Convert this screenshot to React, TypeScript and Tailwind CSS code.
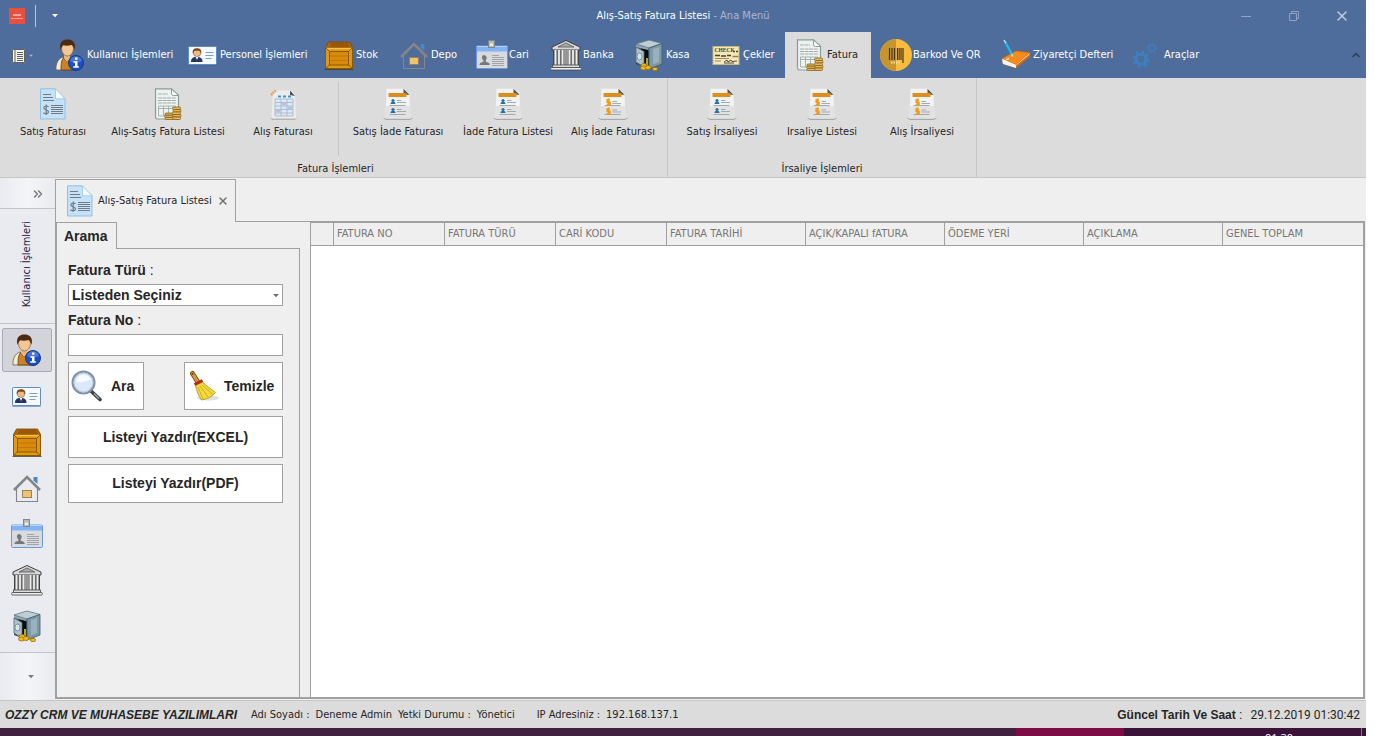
import React from 'react';
import { ChevronUp, ChevronsRight, X } from 'lucide-react';

interface IconProps {
  className?: string;
}

const Svg: React.FC<{ className?: string; children: React.ReactNode }> = ({ className = 'w-8 h-8', children }) => (
  <svg viewBox="0 0 32 32" className={`shrink-0 ${className}`} fill="none" aria-hidden="true">
    {children}
  </svg>
);

const UserInfoIcon = ({ className }: IconProps) => (
  <Svg className={className}>
    <path d="M2 31c-.5-6 2-11.500 7-13l4 2 5-2c5 1 7 5 7 13Z" fill="#f2ead9" stroke="#6e5a3d" strokeWidth=".8" />
    <path d="M7 31c0-5 0-9 2.500-12.500L13 23l4-4.500C21 21 21 26 20 31Z" fill="#c98325" stroke="#6b3d0c" strokeWidth=".8" />
    <path d="M10 15h6v4l-3 4-3-4Z" fill="#e8b583" />
    <ellipse cx="13.500" cy="9.500" rx="6" ry="7.500" fill="#f3c795" stroke="#8a5a2c" strokeWidth=".7" />
    <path d="M6.500 11C4.500 3 9 .5 13.500.5S22.500 3 20.500 11c-.6-2.500-1.500-4-3-5-3 1-6.500.8-8 .3-1.500 1-2.300 2.400-3 4.700Z" fill="#4c2a12" />
    <circle cx="22" cy="24" r="7.500" fill="#1c4fc4" stroke="#123a8c" />
    <path d="M16 22a6.200 6.200 0 0 1 12 0c-4 2-8 2-12 0Z" fill="#5c86e2" opacity=".7" />
    <path d="M21 18.500h2.500v2.300H21Zm-1.500 3.800h4v5h1.300v1.400h-5.600v-1.400H21v-3.600h-1.500Z" fill="#fff" />
  </Svg>
);

const IdCardIcon = ({ className }: IconProps) => (
  <Svg className={className}>
    <rect x="1" y="7.500" width="29" height="19.500" rx="1.500" fill="#40608f" opacity=".5" />
    <rect x="1.500" y="7.500" width="28" height="18" rx="1" fill="#f5faff" stroke="#5f8cc6" />
    <path d="M4 23c0-3.500 1.500-4.500 4-5h3.500c2.500.500 4 1.500 4 5Z" fill="#25375f" />
    <path d="m8.500 17.500 1.500 3.500 1.500-3.500Z" fill="#fff" />
    <circle cx="10" cy="13.800" r="3.800" fill="#ecb98a" stroke="#7a4a1b" strokeWidth=".5" />
    <path d="M5.800 14.500c-.6-4.500 1.500-5.300 4.200-5.300s4.800.8 4.200 5.300l-1.700-2.700h-5Z" fill="#7a4a1b" />
    <path d="M18.500 13.500h8M18.500 16.500h8M18.500 19.500h6" stroke="#7ba0cf" strokeWidth="1.200" />
  </Svg>
);

const CrateIcon = ({ className }: IconProps) => (
  <Svg className={className}>
    <path d="M5.500 3h21l3 5.500H2.500Z" fill="#b0640c" stroke="#7a4706" strokeWidth=".8" />
    <path d="M8 5h17M7 7h19" stroke="#874a05" />
    <rect x="2.500" y="8.500" width="27" height="21" fill="#dc9a10" stroke="#8a5a05" />
    <path d="M3 9.500h26" stroke="#f6c145" strokeWidth="1.500" />
    <rect x="6.500" y="12.500" width="19" height="13.500" fill="#d88a0c" stroke="#8f5505" />
    <path d="M7 17h18M7 21.500h18" stroke="#bd720a" strokeWidth=".8" />
    <path d="m3 9 4 4M29 9l-4 4M3 29l4-3.500M29 29 25 25.500" stroke="#8a5a05" />
    <path d="M1.500 30.500h29" stroke="#4d3a18" strokeWidth=".8" />
  </Svg>
);

const HouseIcon = ({ className }: IconProps) => (
  <Svg className={className}>
    <path d="M22.500 5h4v7l-4-3.500Z" fill="#4a88c4" />
    <path d="M5.500 16v13.500h21V16" stroke="#868686" strokeWidth="1.100" />
    <path d="M3 18 16 5l13 13" stroke="#858585" strokeWidth="2.600" />
    <rect x="11.500" y="18.500" width="9" height="7" fill="#eec371" stroke="#9b8252" />
  </Svg>
);

const BadgeIcon = ({ className }: IconProps) => (
  <Svg className={className}>
    <rect x=".5" y="7" width="31" height="22.500" rx="1" fill="#d7dade" stroke="#6e98dc" />
    <path d="M1 7h30v5.500H1Z" fill="#82b3f5" />
    <path d="M1 7.500h30" stroke="#b6d4fb" />
    <rect x="12.500" y="1.500" width="6" height="7" fill="#b3bcb9" stroke="#7f8a88" />
    <path d="M14 4.500h3V7h-3Z" fill="#e8eceb" />
    <path d="M8 16a2.700 2.700 0 0 1 2.700 2.500c0 1.200-.5 2-1 2.800v1.500c2 .6 4 1 4 3.200H3.500c0-2.200 2-2.600 3.900-3.200v-1.500c-.7-.8-1.500-1.600-1.500-2.800 0-1.500 1-2.500 2.100-2.500Z" fill="#777" />
    <path d="M16 16.500h7M16 18.500h12M16 20.500h12M16 22.500h12M16 24.500h12M16 26.500h12" stroke="#969696" strokeWidth=".8" />
  </Svg>
);

const BankIcon = ({ className }: IconProps) => (
  <Svg className={className}>
    <path d="M16 1.500 30 8v3H2V8Z" fill="#d8d8d8" stroke="#3e3e3e" />
    <path d="m16 4 8 4H8Z" fill="#aaa" stroke="#555" strokeWidth=".8" />
    <path d="M4 11h24v15H4Z" fill="#6d6d6d" />
    <path d="M5.500 11v15M9 11v15M12.500 11v15M19.500 11v15M23 11v15M26.500 11v15" stroke="#ededed" strokeWidth="1.800" />
    <path d="M14 11h4v15h-4Z" fill="#969696" />
    <path d="M3.500 11v15M28.500 11v15" stroke="#444" />
    <rect x="2.500" y="26" width="27" height="2.500" fill="#ddd" stroke="#444" strokeWidth=".8" />
    <rect x=".7" y="28.500" width="30.600" height="2.500" rx=".8" fill="#eee" stroke="#444" strokeWidth=".8" />
  </Svg>
);

const SafeIcon = ({ className }: IconProps) => (
  <Svg className={className}>
    <path d="M3 5 16 1l13 3.500-13 4.500Z" fill="#bfced5" stroke="#5d7883" strokeWidth=".8" />
    <path d="M16 9 29 4.500V25L16 30Z" fill="#7d99a5" stroke="#3d5a67" strokeWidth=".8" />
    <path d="m20 10 6-2v15l-6 2.500Z" fill="#a4bac3" opacity=".7" />
    <path d="M3 5.500 16 9v21L3 25Z" fill="#31444d" />
    <path d="m3 5.500 12.500 3.300v2.700L3 8Z" fill="#8ea6b1" />
    <path d="M8 9.500 15 11v16l-5-1.500Z" fill="#080b0c" />
    <path d="m3 8 8 4.500V28l-8-5Z" fill="#aec0c8" stroke="#506b78" strokeWidth=".8" />
    <ellipse cx="6.500" cy="17.500" rx="2.500" ry="3.500" fill="#d9e4e8" stroke="#7d939d" />
    <path d="M14 19v9" stroke="#f4d940" strokeWidth="1.500" />
    <g fill="#f3bb1d" stroke="#9b6c09" strokeWidth=".8">
      <ellipse cx="11" cy="26.500" rx="3" ry="2" />
      <ellipse cx="10.500" cy="29" rx="3" ry="2" />
      <ellipse cx="15" cy="28.500" rx="2.800" ry="2" />
      <ellipse cx="22" cy="30" rx="2.600" ry="1.700" />
    </g>
  </Svg>
);

const CheckIcon = ({ className }: IconProps) => (
  <Svg className={className}>
    <rect x="3" y="7.500" width="26" height="18" fill="#f2e7bd" stroke="#c9b77c" />
    <text x="4.500" y="13" fontSize="5.500" fontWeight="bold" fill="#57450f" fontFamily="Liberation Serif, serif">
      CHECK
    </text>
    <path d="M23 12.500h2M26 12.500h2M5 16.500h5M11 17h5M17 16.500h4" stroke="#57450f" strokeWidth="1.300" />
    <path d="M22.500 17.500h6" stroke="#95824b" strokeWidth="1.500" />
    <path d="M5 19.500h14M5 22h6" stroke="#8b7a42" strokeWidth=".8" />
    <path d="m14 23 3-2 1 2 3-2 1 1.500 5-.500M14 24h10" stroke="#30280f" strokeWidth=".8" />
  </Svg>
);

const Coins = () => (
  <g fill="#e4b656" stroke="#805713" strokeWidth=".7">
    <rect x="20.500" y="19" width="8" height="2.500" rx="1" />
    <rect x="21" y="21.500" width="8" height="2.500" rx="1" />
    <rect x="20.500" y="24" width="8" height="2.500" rx="1" />
    <rect x="21" y="26.500" width="8" height="2.500" rx="1" />
    <rect x="20.500" y="29" width="8" height="2.500" rx="1" />
    <rect x="13" y="25" width="7.500" height="2.200" rx="1" />
    <rect x="12.500" y="27.200" width="8" height="2.200" rx="1" />
    <rect x="13" y="29.400" width="8" height="2.200" rx="1" />
  </g>
);

const InvoiceCoinsIcon = ({ className }: IconProps) => (
  <Svg className={className}>
    <path d="M3.500.800h16l7 6.500V31h-21a2 2 0 0 1-2-2V2.800Z" fill="#edf2f0" stroke="#8a9c96" strokeWidth="1.200" />
    <path d="M19.500 1v4.500a2 2 0 0 0 2 2h5Z" fill="#fff" stroke="#8a9c96" />
    <path d="M6 6h10M6 10h18M6 12.500h18M6 15h18" stroke="#a1aeaa" strokeDasharray="4 .6" />
    <path d="M6.500 18h17v10h-17ZM6.500 20.500h17M11.500 18v10M16.500 18v10" stroke="#9eaca7" strokeWidth=".9" />
    <Coins />
  </Svg>
);

const BarcodeIcon = ({ className }: IconProps) => (
  <Svg className={className}>
    <circle cx="16" cy="16" r="16" fill="#f8bb3c" />
    <path d="M16 0a16 16 0 0 0 0 32Z" fill="#c79530" />
    <path d="M9.500 9v12M12 9v12M14.500 9v12M17.500 9v12M20 9v12M23 9v15" stroke="#47351a" strokeWidth="1.200" />
    <path d="M18.800 9v12M21.500 9v12" stroke="#47351a" strokeWidth=".6" />
    <path d="M11 23.500h10" stroke="#f7dfaa" strokeWidth="2" strokeDasharray="1.500 1" />
  </Svg>
);

const NotebookIcon = ({ className }: IconProps) => (
  <Svg className={className}>
    <path d="m2 20 14-8 14 2v3L16 29 3 24.500Z" fill="#f5ead9" stroke="#a35a18" strokeWidth=".6" />
    <path d="m2 19.500 14-7.500 14 1.500L16 25.500Z" fill="#f58a1d" stroke="#bf5c08" strokeWidth=".6" />
    <path d="m2 20 14 6v3L3 25Z" fill="#fff4e5" />
    <path d="M16 29 30 17.500V15L16 26.500Z" fill="#d56609" />
    <path d="m6 21 3-1.600" stroke="#ffe0b0" strokeWidth="1.500" />
    <path d="m5.500 3.500 6.500 12" stroke="#22b8e4" strokeWidth="2.400" />
    <path d="m4 1 1.800 3.200M11.500 15l1.300 2.500" stroke="#bcebf8" strokeWidth="1.400" />
  </Svg>
);

const GearsIcon = ({ className }: IconProps) => (
  <Svg className={className}>
    <g stroke="#3f7fbd">
      <circle cx="10" cy="20" r="5" strokeWidth="3.200" />
      <circle cx="10" cy="20" r="7.600" strokeWidth="2.200" strokeDasharray="3 2.970" />
      <circle cx="21" cy="9" r="3" strokeWidth="1.500" opacity=".8" />
      <circle cx="21" cy="9" r="4.600" strokeWidth="1.500" strokeDasharray="1.800 1.810" opacity=".8" />
    </g>
  </Svg>
);

const InvoiceDollarIcon = ({ className }: IconProps) => (
  <Svg className={className}>
    <path d="M3.500.800h14.500l10 10V31h-24.500Z" fill="#c5e2f8" stroke="#91bfe2" />
    <path d="M18.500.800v10h9.500Z" fill="#f8fcff" stroke="#91bfe2" strokeWidth=".7" />
    <path d="M6 6.500h8M6 9.500h10M6 12.500h11M14 17.500h12M14 19.500h12M14 21.500h12M14 23.500h12M14 25.500h12" stroke="#717b84" />
    <path d="M11.500 18.800c-.8-1-4.500-1.400-4.700 1 0 2.300 4.700 1.500 4.700 4 0 2.400-4 2.400-5.200.8M9.200 16.500V27" stroke="#6e7a84" strokeWidth="1.200" />
  </Svg>
);

const Sheet = () => (
  <>
    <path d="M1 30h30l-3 2H4Z" fill="#a9a9a9" />
    <path d="M4.500.800h18l5 5.200 1 24.500H3.500Z" fill="#f3f3f3" />
    <path d="M4 18h24l.500 12.500h-25Z" fill="#e2e2e2" />
    <path d="m21.500.800 6 6h-6Z" fill="#565656" />
    <path d="M6.500 5h18v4h-18Z" fill="#e08e1b" />
    <path d="M7.500 17.500h16M7.500 26.500h16" stroke="#9fabb1" />
  </>
);

const ReportPeopleIcon = ({ className }: IconProps) => (
  <Svg className={className}>
    <Sheet />
    <g fill="#28709f">
      <circle cx="11" cy="12.500" r="1.600" />
      <path d="M8.500 16c0-1.500 1-2.200 2.500-2.200s2.500.7 2.500 2.200Z" />
      <circle cx="11" cy="21.500" r="1.600" />
      <path d="M8.500 25c0-1.500 1-2.200 2.500-2.200s2.500.7 2.500 2.200Z" />
    </g>
    <path d="M15 12.500h4.500M15 14.500h9M15 21.500h4.500M15 23.500h9" stroke="#9fabb1" />
  </Svg>
);

const ReportMoneyIcon = ({ className }: IconProps) => (
  <Svg className={className}>
    <Sheet />
    <path d="M13 12h-2.800v2.200H13v2.300H9.800M13 21h-2.800v2.200H13v2.300H9.800M11.500 10.500V18M11.500 19.500V27" stroke="#f49a13" strokeWidth="1.600" />
    <path d="M15.500 13.500h4.500M15.500 15.500h8.500M15.500 22h4.500M15.500 24h8.500" stroke="#9fabb1" />
  </Svg>
);

const SpreadsheetIcon = ({ className }: IconProps) => (
  <Svg className={className}>
    <path d="M3 30h27l-2 2H5Z" fill="#b4b4b4" />
    <path d="M6 2.500h18l4 4.500 1 23.500H4.500Z" fill="#ececec" />
    <path d="m23 2.500 5 5.500-5-1Z" fill="#4c5054" />
    <path d="M11 8.500h3M16 8.500h3M21 8.500h3" stroke="#3c96cf" strokeWidth="1.800" />
    <path d="M8 11h18v17H8Z" fill="#dce8f4" stroke="#a3b3c6" strokeWidth=".8" />
    <path d="M8 14.500h18M8 18h18M8 21.500h18M8 25h18M14 11v17M20 11v17" stroke="#a3b3c6" strokeWidth=".8" />
    <path d="M14.500 15h5v2.500h-5ZM8.500 22h5v2.500h-5ZM20.500 18.500h5V21h-5Z" fill="#b4c5da" />
    <path d="m4 7 5-5" stroke="#e0a86c" strokeWidth="2.600" strokeDasharray="1.800 .6" />
  </Svg>
);

const SearchGlassIcon = ({ className }: IconProps) => (
  <Svg className={className}>
    <path d="m20 21 9 8.500" stroke="#3c3f44" strokeWidth="3.600" strokeLinecap="round" />
    <path d="m23 23.500 5 5" stroke="#a6abb2" strokeWidth="1.300" />
    <circle cx="12.500" cy="12.500" r="11" fill="#dce9fb" stroke="#7f8fa5" strokeWidth="2" />
    <circle cx="12.500" cy="12.500" r="9.300" stroke="#bccadd" />
    <path d="M5 11c2-8 13-8 15-1-5-1-9 5-15 1Z" fill="#fff" opacity=".8" />
  </Svg>
);

const BroomIcon = ({ className }: IconProps) => (
  <Svg className={className}>
    <ellipse cx="20" cy="28" rx="11" ry="2.500" fill="#dedede" />
    <path d="m4.500 3.500 5 8" stroke="#7d5411" strokeWidth="5" strokeLinecap="round" />
    <path d="m4.500 3.500 5 8" stroke="#d39a3a" strokeWidth="3" strokeLinecap="round" />
    <circle cx="4.500" cy="4" r="1" fill="#6d430a" />
    <path d="m7.500 15.500 7-3.500c4 4 8.500 7 13 10.500-3 4-8 6.500-14 7.500-3-4.500-5-9-6-14.500Z" fill="#f3d940" stroke="#b3920f" strokeWidth=".8" />
    <path d="m10 17 5 12M12 16l8 11M14 15l11 9.500" stroke="#c4a318" strokeWidth=".8" />
    <path d="m6.500 14.500 8-4" stroke="#bd2321" strokeWidth="3" />
  </Svg>
);

const CaretIcon = ({ className }: IconProps) => (
  <svg viewBox="0 0 6 4" className={className} aria-hidden="true">
    <path d="M0 0h6L3 3.200Z" fill="currentColor" />
  </svg>
);

const ribbonTabs = [
  { label: 'Kullanıcı İşlemleri', icon: UserInfoIcon, width: 'w-[133px]' },
  { label: 'Personel İşlemleri', icon: IdCardIcon, width: 'w-[136px]' },
  { label: 'Stok', icon: CrateIcon, width: 'w-[75px]' },
  { label: 'Depo', icon: HouseIcon, width: 'w-[78px]' },
  { label: 'Cari', icon: BadgeIcon, width: 'w-[74px]' },
  { label: 'Banka', icon: BankIcon, width: 'w-[83px]' },
  { label: 'Kasa', icon: SafeIcon, width: 'w-[77px]' },
  { label: 'Çekler', icon: CheckIcon, width: 'w-[84px]' },
  { label: 'Fatura', icon: InvoiceCoinsIcon, width: 'w-[86px]' },
  { label: 'Barkod Ve QR', icon: BarcodeIcon, width: 'w-[120px]' },
  { label: 'Ziyaretçi Defteri', icon: NotebookIcon, width: 'w-[131px]' },
  { label: 'Araçlar', icon: GearsIcon, width: 'w-[86px]' },
];

const invoiceActions = [
  { label: 'Satış Faturası', icon: InvoiceDollarIcon, width: 'w-[90px]' },
  { label: 'Alış-Satış Fatura Listesi', icon: InvoiceCoinsIcon, width: 'w-[140px]' },
  { label: 'Alış Faturası', icon: SpreadsheetIcon, width: 'w-[90px]' },
];

const returnActions = [
  { label: 'Satış İade Faturası', icon: ReportPeopleIcon, width: 'w-[110px]' },
  { label: 'İade Fatura Listesi', icon: ReportPeopleIcon, width: 'w-[110px]' },
  { label: 'Alış İade Faturası', icon: ReportMoneyIcon, width: 'w-[100px]' },
];

const waybillActions = [
  { label: 'Satış İrsaliyesi', icon: ReportPeopleIcon, width: 'w-[100px]' },
  { label: 'Irsaliye Listesi', icon: ReportMoneyIcon, width: 'w-[100px]' },
  { label: 'Alış İrsaliyesi', icon: ReportMoneyIcon, width: 'w-[100px]' },
];

const sideItems = [
  { id: 'Kullanıcı İşlemleri', icon: UserInfoIcon },
  { id: 'Personel İşlemleri', icon: IdCardIcon },
  { id: 'Stok', icon: CrateIcon },
  { id: 'Depo', icon: HouseIcon },
  { id: 'Cari', icon: BadgeIcon },
  { id: 'Banka', icon: BankIcon },
  { id: 'Kasa', icon: SafeIcon },
];

const columns = [
  { label: 'FATURA NO', width: 'w-[111px]' },
  { label: 'FATURA TÜRÜ', width: 'w-[111px]' },
  { label: 'CARİ KODU', width: 'w-[111px]' },
  { label: 'FATURA TARİHİ', width: 'w-[139px]' },
  { label: 'AÇIK/KAPALI fATURA', width: 'w-[139px]' },
  { label: 'ÖDEME YERİ', width: 'w-[139px]' },
  { label: 'AÇIKLAMA', width: 'w-[139px]' },
  { label: 'GENEL TOPLAM', width: '' },
];

const RibbonActions = ({ items }: { items: typeof invoiceActions }) => (
  <div className="flex">
    {items.map((item) => {
      const Icon = item.icon;
      return (
        <button key={item.label} className={`flex flex-col items-center gap-1 pt-1.5 whitespace-nowrap ${item.width}`}>
          <Icon />
          <span className="leading-4">{item.label}</span>
        </button>
      );
    })}
  </div>
);

const TitleBar = () => (
  <header className="flex items-center h-8 text-white">
    <div className="flex items-center flex-1">
      <span className="flex flex-col items-center justify-center gap-0.5 w-4 h-4 ml-[9px] bg-[#e94f3f]">
        <span className="w-2 h-0.5 bg-[#f4a79f]" />
        <span className="w-3 h-px bg-[#f4a79f]" />
      </span>
      <span className="w-px h-[22px] ml-2.5 bg-[#b9c5d8]" />
      <button aria-label="Hızlı erişim" className="ml-4">
        <CaretIcon className="w-1.5 h-1" />
      </button>
    </div>
    <h1>
      Alış-Satış Fatura Listesi <span className="text-[#a9b8d0]">- Ana Menü</span>
    </h1>
    <div className="flex items-center justify-end flex-1 text-[#8fa3c4]">
      <button aria-label="Küçült" className="flex justify-center w-12">
        <span className="w-2.5 h-px bg-[#8fa3c4]" />
      </button>
      <button aria-label="Geri yükle" className="flex justify-center w-12">
        <svg viewBox="0 0 10 10" className="w-2.5 h-2.5" fill="none" stroke="currentColor">
          <path d="M.5 2.500h7v7h-7ZM2.500 2.500v-2h7v7h-2" />
        </svg>
      </button>
      <button aria-label="Kapat" className="flex justify-center w-12 text-[#c3cede]">
        <X className="w-4 h-4" strokeWidth={2} />
      </button>
    </div>
  </header>
);

const Ribbon = () => (
  <>
    <nav className="flex items-center h-[46px] text-white">
      <button aria-label="Dosya" className="flex items-center gap-1 w-[45px] pt-0.5 pl-3 shrink-0">
        <svg viewBox="0 0 13 14" className="w-[13px] h-3.5">
          <path d="M0 0h13v14H0Z" fill="#f3f3ee" />
          <path d="M.5.5h12v13H.5ZM3 0v14" fill="none" stroke="#60645f" />
          <path d="M5 3.500h6M5 5.500h6M5 7.500h6M5 9.500h6M5 11.500h6" stroke="#60645f" />
        </svg>
        <CaretIcon className="w-1 h-1 text-[#a9b8d0]" />
      </button>
      {ribbonTabs.map((tab) => {
        const Icon = tab.icon;
        return (
          <button
            key={tab.label}
            className={`flex items-center h-full pl-[9px] gap-px shrink-0 whitespace-nowrap ${tab.width} ${
              tab.label === 'Fatura' ? 'bg-[#dcdcdc] text-[#262626]' : ''
            }`}
          >
            <Icon />
            <span className="pt-px">{tab.label}</span>
          </button>
        );
      })}
      <button aria-label="Şeridi daralt" className="ml-auto mr-1 text-[#2f3b50]">
        <ChevronUp className="w-3 h-3" strokeWidth={3} />
      </button>
    </nav>

    <section className="flex h-[100px] bg-[#dcdcdc] border-b border-[#c6c6c6] text-[#262626]">
      <div className="flex flex-col justify-between pl-2 pr-1 pt-1 border-r border-[#c6c6c6]">
        <div className="flex">
          <RibbonActions items={invoiceActions} />
          <span className="w-px h-[74px] ml-2.5 mr-1 bg-[#c6c6c6]" />
          <RibbonActions items={returnActions} />
        </div>
        <span className="text-center leading-4">Fatura İşlemleri</span>
      </div>
      <div className="flex flex-col justify-between px-1 pt-1 border-r border-[#c6c6c6]">
        <RibbonActions items={waybillActions} />
        <span className="text-center leading-4">İrsaliye İşlemleri</span>
      </div>
    </section>
  </>
);

const Sidebar = () => (
  <aside className="flex flex-col w-[55px] shrink-0 bg-[#e9ebf0]">
    <button
      aria-label="Genişlet"
      className="flex items-center justify-end h-[31px] pt-0.5 pr-2.5 border-b border-[#c3c4ca] bg-linear-to-r from-[#e9ebf0] via-[#f4f5f7] to-[#e9ebf0] text-[#777984]"
    >
      <ChevronsRight className="w-3.5 h-3.5" strokeWidth={2.5} />
    </button>
    <div className="flex items-center justify-center h-[115px] pb-1 border-b border-[#c3c4ca]">
      <span className="[writing-mode:vertical-rl] rotate-180 text-[#1f2340]">Kullanıcı İşlemleri</span>
    </div>
    <div className="flex flex-col gap-0.5 px-0.5 pt-1">
      {sideItems.map((item, index) => {
        const Icon = item.icon;
        return (
          <button
            key={item.id}
            aria-label={item.id}
            className={`flex items-center justify-center h-11 w-[50px] rounded-xs border ${
              index === 0 ? 'bg-[#d3d4da] border-[#a9abb3]' : 'border-transparent'
            }`}
          >
            <Icon />
          </button>
        );
      })}
    </div>
    <button
      aria-label="Diğer"
      className="flex items-center justify-center flex-1 pl-1.5 mt-1 border-t border-[#c3c4ca] bg-linear-to-r from-[#e9ebf0] via-[#f4f5f7] to-[#e9ebf0] text-[#77788a]"
    >
      <CaretIcon className="w-1.5 h-1" />
    </button>
  </aside>
);

const formButton = 'flex items-center bg-white border border-[#a0a0a0] font-bold';

const SearchPanel = () => (
  <section className="flex flex-col w-[243px] shrink-0 font-['Liberation_Sans',Arial,sans-serif] text-[14px] text-[#262626]">
    <h2 className="relative z-10 w-[60px] h-[27px] -mb-px px-[7px] pt-[3px] leading-5 font-bold bg-[#efefef] border-t border-r border-[#a0a0a0]">
      Arama
    </h2>
    <form className="flex flex-col flex-1 pl-[11px] pr-4 pt-[11px] border-t border-r border-[#a0a0a0]" onSubmit={(e) => e.preventDefault()}>
      <label htmlFor="invoice-type" className="leading-5 font-bold">
        Fatura Türü <span className="font-normal">:</span>
      </label>
      <div className="relative mt-1">
        <select id="invoice-type" className="block w-full h-[22px] pl-[3px] appearance-none bg-white border border-[#a0a0a0] font-bold">
          <option>Listeden Seçiniz</option>
        </select>
        <CaretIcon className="absolute right-1 top-2.5 w-1.5 h-1 text-[#707070] pointer-events-none" />
      </div>
      <label htmlFor="invoice-no" className="mt-1 leading-5 font-bold">
        Fatura No <span className="font-normal">:</span>
      </label>
      <input id="invoice-no" type="text" className="h-[22px] mt-1 px-1 bg-white border border-[#a0a0a0]" />
      <div className="flex justify-between mt-1.5">
        <button className={`${formButton} gap-2 w-[76px] h-12 pl-0.5`}>
          <SearchGlassIcon />
          Ara
        </button>
        <button className={`${formButton} gap-1 w-[99px] h-12 pl-[3px]`}>
          <BroomIcon />
          Temizle
        </button>
      </div>
      <button className={`${formButton} justify-center h-[42px] mt-1.5`}>Listeyi Yazdır(EXCEL)</button>
      <button className={`${formButton} justify-center h-[39px] mt-1.5`}>Listeyi Yazdır(PDF)</button>
    </form>
  </section>
);

const InvoiceGrid = () => (
  <section className="flex-1 ml-2.5 bg-white border-t border-l border-[#a0a0a0]">
    <table className="w-full table-fixed border-separate border-spacing-0">
      <thead>
        <tr className="h-[23px] bg-[#efefef] text-left text-[#767676] whitespace-nowrap">
          <th className="w-[23px] border-r border-b border-[#a0a0a0]" />
          {columns.map((col) => (
            <th key={col.label} className={`pl-[3px] font-normal border-r border-b border-[#a0a0a0] last:border-r-0 ${col.width}`}>
              {col.label}
            </th>
          ))}
        </tr>
      </thead>
      <tbody />
    </table>
  </section>
);

const StatusBar = () => (
  <footer className="flex items-center justify-between h-7 pt-px pl-[5px] pr-1.5 bg-[#dcdcdc] border-t border-[#c6c6c6] text-[#262626] whitespace-nowrap">
    <div className="flex items-center gap-1.5">
      <span className="pr-2 font-['Liberation_Sans',Arial,sans-serif] text-[12px] font-bold italic">OZZY CRM VE MUHASEBE YAZILIMLARI</span>
      <span>Adı Soyadı :</span>
      <span>Deneme Admin</span>
      <span>Yetki Durumu :</span>
      <span>Yönetici</span>
      <span className="ml-4">IP Adresiniz :</span>
      <span>192.168.137.1</span>
    </div>
    <div className="flex items-center gap-2 text-[12px]">
      <span className="font-['Liberation_Sans',Arial,sans-serif]">
        <b>Güncel Tarih Ve Saat</b> :
      </span>
      <span className="font-[Roboto,sans-serif]">29.12.2019 01:30:42</span>
    </div>
  </footer>
);

const Taskbar = () => (
  <div className="flex justify-end h-2 overflow-hidden bg-[#42203f] text-white">
    <span className="w-[108px] bg-[#7d0c46]" />
    <div className="flex justify-end w-[242px] bg-[#3b1338]">
      <span className="pt-0.5 mr-[68px] font-['Open_Sans',sans-serif] text-[11px]">01:30</span>
      <span className="w-px mr-1 bg-[#8b7089]" />
    </div>
  </div>
);

export default function App() {
  return (
    <div className="min-h-screen pr-2 flex flex-col bg-white font-['DejaVu_Sans_Condensed','DejaVu_Sans',sans-serif] text-[11px]">
      <div className="bg-[#4e6d9c]">
        <TitleBar />
        <Ribbon />
      </div>
      <main className="flex flex-1 bg-[#efefef]">
        <Sidebar />
        <div className="flex flex-col flex-1 pt-px pr-px pb-px">
          <div className="flex">
            <div className="flex items-center gap-0.5 w-[181px] h-[43px] pl-2 border-t border-x border-[#a0a0a0] text-[#262626] whitespace-nowrap">
              <InvoiceDollarIcon />
              <span className="flex-1">Alış-Satış Fatura Listesi</span>
              <button aria-label="Sekmeyi kapat" className="mr-1.5 text-[#707070]">
                <X className="w-3 h-3" strokeWidth={3} />
              </button>
            </div>
            <div className="flex-1 border-b border-[#a0a0a0]" />
          </div>
          <div className="flex flex-1 border-x-2 border-b-2 border-[#a0a0a0]">
            <SearchPanel />
            <InvoiceGrid />
          </div>
        </div>
      </main>
      <StatusBar />
      <Taskbar />
    </div>
  );
}
